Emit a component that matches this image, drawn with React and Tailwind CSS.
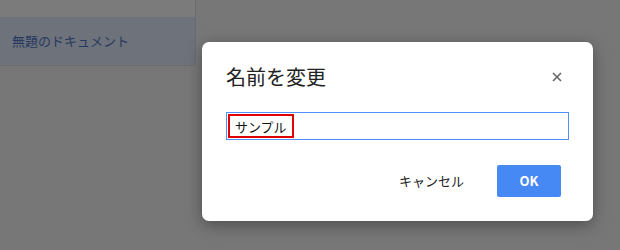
export default function App() {
  return (
    <div
      className="relative w-[620px] h-[250px] overflow-hidden bg-[#777777]"
      style={{ fontFamily: '"Noto Sans CJK JP", "Liberation Sans", sans-serif' }}
    >
      {/* dimmed sidebar behind the modal */}
      <div className="w-[196px] h-[66px] flex flex-col border-r border-b border-[#6c6c6c] rounded-br-[5px] bg-[#7b7b7b]">
        <div className="h-[17px]" />
        <div className="flex-1 flex items-center pl-[12px] bg-[#6d727b] rounded-br-[5px]">
          <span className="text-[13px] text-[#27395f] tracking-[0px]">無題のドキュメント</span>
        </div>
      </div>

      {/* rename dialog */}
      <div className="absolute left-[202px] top-[42px] w-[391px] h-[179px] bg-white rounded-[7px] shadow-[0_4px_16px_rgba(0,0,0,0.35)] px-[24px] pt-[21px]">
        <div className="flex items-center justify-between h-[28px]">
          <h1 className="text-[20px] text-[#222222] leading-[28px]">名前を変更</h1>
          <button className="mr-[7px] text-[#666666]">
            <svg width="10" height="10" viewBox="0 0 10 10">
              <path d="M1 1L9 9M9 1L1 9" stroke="#666666" strokeWidth="1.6" />
            </svg>
          </button>
        </div>

        <div className="mt-[21px] h-[28px] border border-[#4d90fe] flex items-center pl-[1px]">
          <span className="h-[24px] px-[5px] border-2 border-[#e00000] flex items-center text-[13px] text-[#111111] leading-none">
            サンプル
          </span>
        </div>

        <div className="mt-[25px] flex items-center justify-end gap-[33px] pr-[8px]">
          <span className="text-[13px] text-[#222222]">キャンセル</span>
          <button className="w-[64px] h-[32px] rounded-[2px] bg-[#4688f4] text-white text-[13px] font-bold">
            OK
          </button>
        </div>
      </div>
    </div>
  );
}
